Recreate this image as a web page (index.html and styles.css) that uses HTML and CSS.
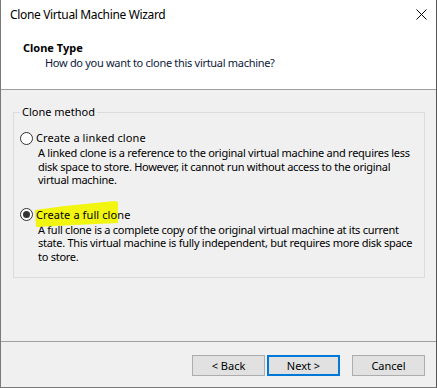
FILE: index.html
```html
<!DOCTYPE html>
<html lang="en">
<head>
  <meta charset="UTF-8" />
  <title>Clone Virtual Machine Wizard</title>
  <link rel="stylesheet" href="styles.css">
</head>
<body>
  <div class="window" role="dialog" aria-labelledby="wiz-title">

    <div class="titlebar">
      <span id="wiz-title" class="title">Clone Virtual Machine Wizard</span>
      <button class="close" type="button" aria-label="Close">
        <svg width="11" height="11" viewBox="0 0 11 11">
          <path d="M0.5 0.5 L10.5 10.5 M10.5 0.5 L0.5 10.5" stroke="#000" stroke-width="1" fill="none" />
        </svg>
      </button>
    </div>

    <header class="header">
      <h2>Clone Type</h2>
      <p>How do you want to clone this virtual machine?</p>
    </header>

    <main class="content">
      <fieldset class="group">
        <legend>Clone method</legend>

        <div class="option">
          <label class="choice">
            <input type="radio" name="method" value="linked" />
            <span class="dot"></span>
            <span class="text">Create a linked clone</span>
          </label>
          <p class="desc">A linked clone is a reference to the original virtual machine and requires less<br>
            disk space to store. However, it cannot run without access to the original<br>
            virtual machine.</p>
        </div>

        <div class="option">
          <label class="choice">
            <input type="radio" name="method" value="full" checked />
            <span class="dot"></span>
            <span class="text marked">
              <svg class="marker" width="84" height="28" viewBox="0 0 84 28" aria-hidden="true">
                <polygon points="0,9 30,5 80,0 83,1 83,22 40,24 1,26" fill="#f2f50f" />
              </svg>
              Create a full clone
            </span>
          </label>
          <p class="desc">A full clone is a complete copy of the original virtual machine at its current<br>
            state. This virtual machine is fully independent, but requires more disk space<br>
            to store.</p>
        </div>
      </fieldset>
    </main>

    <footer class="footer">
      <button type="button" class="btn">&lt; Back</button>
      <button type="button" class="btn default">Next &gt;</button>
      <button type="button" class="btn cancel">Cancel</button>
    </footer>
  </div>
</body>
</html>
```

FILE: styles.css
```css
:root {
  --face: #f0f0f0;
  --line: #a0a0a0;
  --group-line: #dcdcdc;
  --frame: #7a7a7a;
  --btn-face: #e1e1e1;
  --btn-border: #adadad;
  --accent: #0078d7;
  --ui-font: 'Noto Sans', 'Open Sans', sans-serif;
}

*, *::before, *::after {
  box-sizing: border-box;
}
body {
  margin: 0;
  font-family: var(--ui-font);
  font-size: 11px;
  color: #000;
  background: var(--face);
}

.window {
  width: 437px;
  height: 388px;
  display: flex;
  flex-direction: column;
  background: var(--face);
  border-left: 1px solid var(--frame);
  border-right: 1px solid #555;
  border-bottom: 1px solid var(--frame);
}

.titlebar {
  height: 30px;
  flex: none;
  display: flex;
  align-items: center;
  justify-content: space-between;
  background: #fff;
  padding: 0 9px 0 9px;
}
.title {
  font-size: 12px;
  line-height: 16px;
  letter-spacing: -0.35px;
}
.close {
  border: 0;
  background: none;
  padding: 0;
  width: 11px;
  height: 11px;
  margin-top: -2px;
  display: flex;
}

.header {
  height: 60px;
  flex: none;
  background: #fff;
  border-bottom: 1px solid var(--line);
  padding: 10px 0 0 22px;
}
.header h2 {
  margin: 0;
  font-size: 11px;
  font-weight: 700;
  line-height: 15px;
}
.header p {
  margin: 0;
  padding-left: 22px;
  line-height: 15px;
  letter-spacing: -0.3px;
  color: #0b1a3a;
}

.content {
  flex: 1;
  padding: 15px 11px 0 12px;
}

.group {
  margin: 0;
  border: 1px solid var(--group-line);
  padding: 3px 6px 14px 6px;
}
.group legend {
  padding: 0 2px;
  line-height: 14px;
}

.option:first-of-type {
  margin-top: 9px;
}
.option + .option {
  margin-top: 21px;
}

.choice {
  display: flex;
  align-items: center;
  height: 14px;
  gap: 3px;
}
.choice input {
  display: none;
}
.dot {
  width: 13px;
  height: 13px;
  border: 1px solid #333;
  border-radius: 50%;
  background: #fff;
  flex: none;
  display: flex;
  align-items: center;
  justify-content: center;
}
.choice input:checked + .dot::after {
  content: '';
  width: 7px;
  height: 7px;
  border-radius: 50%;
  background: #333;
}

.text {
  line-height: 14px;
  letter-spacing: 0.1px;
}
.marked {
  position: relative;
  z-index: 0;
}
.marker {
  position: absolute;
  left: -1px;
  top: -7px;
  z-index: -1;
}

.desc {
  margin: 1px 0 0 18px;
  line-height: 13.5px;
  letter-spacing: -0.27px;
  white-space: nowrap;
}

.footer {
  height: 46px;
  flex: none;
  border-top: 1px solid var(--line);
  display: flex;
  justify-content: flex-end;
  align-items: flex-start;
  padding: 13px 11px 0 0;
}
.btn {
  width: 73px;
  height: 21px;
  padding: 0;
  font-family: var(--ui-font);
  font-size: 11px;
  color: #000;
  background: var(--btn-face);
  border: 1px solid var(--btn-border);
}
.btn + .btn {
  margin-left: 2px;
}
.btn.default {
  border: 2px solid var(--accent);
}
.btn.cancel {
  margin-left: 12px;
}
```
